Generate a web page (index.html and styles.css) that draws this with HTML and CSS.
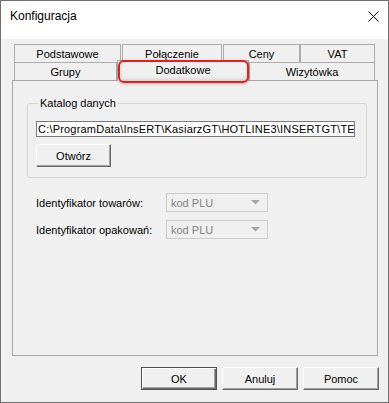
FILE: index.html
```html
<!DOCTYPE html>
<html lang="pl">
<head>
    <meta charset="UTF-8">
    <title>Konfiguracja</title>
    <link rel="stylesheet" href="styles.css">
</head>
<body>
    <div class="window">
        <div class="titlebar">
            <span class="title">Konfiguracja</span>
            <svg class="close" width="11" height="11" viewBox="0 0 11 11">
                <path d="M0.5 0.5 L10.5 10.5 M10.5 0.5 L0.5 10.5" stroke="#000" stroke-width="1" fill="none"/>
            </svg>
        </div>

        <div class="client">
            <div class="tabs">
                <div class="tab-row">
                    <div class="tab t-podstawowe">Podstawowe</div>
                    <div class="tab t-polaczenie">Połączenie</div>
                    <div class="tab t-ceny">Ceny</div>
                    <div class="tab t-vat">VAT</div>
                </div>
                <div class="tab-row">
                    <div class="tab t-grupy">Grupy</div>
                    <div class="tab t-dodatkowe selected">
                        Dodatkowe
                        <span class="highlight"></span>
                    </div>
                    <div class="tab t-wizytowka">Wizytówka</div>
                </div>
            </div>

            <div class="panel">
                <fieldset class="group">
                    <legend>Katalog danych</legend>
                    <div class="textbox">C:\ProgramData\InsERT\KasiarzGT\HOTLINE3\INSERTGT\TEMP</div>
                    <button class="btn btn-open">Otwórz</button>
                </fieldset>

                <div class="field-row first">
                    <span class="label">Identyfikator towarów:</span>
                    <div class="combo">
                        <span>kod PLU</span>
                        <svg width="9" height="5" viewBox="0 0 9 5"><path d="M0 0 H9 L4.5 4.5 Z" fill="#a5a5a5"/></svg>
                    </div>
                </div>
                <div class="field-row">
                    <span class="label">Identyfikator opakowań:</span>
                    <div class="combo">
                        <span>kod PLU</span>
                        <svg width="9" height="5" viewBox="0 0 9 5"><path d="M0 0 H9 L4.5 4.5 Z" fill="#a5a5a5"/></svg>
                    </div>
                </div>
            </div>

            <div class="buttons">
                <button class="btn default">OK</button>
                <button class="btn">Anuluj</button>
                <button class="btn">Pomoc</button>
            </div>
        </div>
    </div>
</body>
</html>
```

FILE: styles.css
```css
body {
    margin: 0;
    font-family: "Liberation Sans", Arial, sans-serif;
    font-size: 11px;
    color: #000;
    background: #ffffff;
}

.window {
    width: 389px;
    height: 403px;
    box-sizing: border-box;
    border: 1px solid #707070;
    background-color: #f0f0f0;
    display: flex;
    flex-direction: column;
}

/* Title bar */
.titlebar {
    height: 38px;
    flex: none;
    background: #fff;
    display: flex;
    justify-content: space-between;
    align-items: flex-start;
    padding: 7px 9px 0 9px;
    box-sizing: border-box;
}
.title {
    font-size: 12px;
    line-height: 16px;
}
.close {
    margin-top: 3px;
}

/* Client area */
.client {
    flex: 1;
    padding: 5px 10px 0 11px;
}

.tabs {
    margin-left: 2px;
}
.tab-row {
    display: flex;
    align-items: flex-start;
}
.tab {
    height: 18px;
    line-height: 18px;
    box-sizing: border-box;
    border: 1px solid #acacac;
    border-bottom: none;
    text-align: center;
    background: #f0f0f0;
    white-space: nowrap;
}
.t-podstawowe { width: 107px; margin-right: 1px; }
.t-polaczenie { width: 100px; margin-right: 1px; }
.t-ceny { width: 77px; }
.t-vat { width: 75px; }
.t-grupy { width: 103px; }
.t-dodatkowe { width: 132px; }
.t-wizytowka { width: 126px; }

.tab.selected {
    position: relative;
    z-index: 1;
    height: 21px;
    margin-top: -2px;
    margin-bottom: -1px;
    line-height: 19px;
}

/* red marker drawn over the selected tab */
.highlight {
    position: absolute;
    left: 0;
    top: -1px;
    width: 131px;
    height: 23px;
    box-sizing: border-box;
    border: 2px solid #ec1c1c;
    border-radius: 6px;
    box-shadow: 0 1px 3px rgba(0, 0, 0, 0.25), inset 0 -2px 3px rgba(0, 0, 0, 0.12);
}

/* Tab page */
.panel {
    width: 366px;
    height: 276px;
    box-sizing: border-box;
    border: 1px solid #a7a7a7;
    padding: 16px 0 0 14px;
}

.group {
    width: 340px;
    box-sizing: border-box;
    margin: 0;
    border: 1px solid #d5d5d5;
    border-radius: 3px;
    padding: 11px 0 10px 8px;
}
.group legend {
    margin-left: 2px;
    padding: 0 2px;
    line-height: 13px;
}

.textbox {
    width: 319px;
    height: 16px;
    box-sizing: border-box;
    border: 1px solid #7a7a7a;
    background: #fff;
    line-height: 14px;
    padding-left: 1px;
    letter-spacing: 0.2px;
    overflow: hidden;
    white-space: nowrap;
}

.btn {
    font-family: "Liberation Sans", Arial, sans-serif;
    font-size: 11px;
    color: #000;
    width: 76px;
    height: 23px;
    padding: 0;
    background: #f0f0f0;
    border: 1px solid;
    border-color: #fff #696969 #696969 #fff;
    box-shadow: inset -1px -1px #a0a0a0;
    border-radius: 0;
}
.btn-open {
    display: block;
    width: 75px;
    margin-top: 7px;
}
.btn.default {
    border: 1px solid #505050;
    box-shadow: inset 1px 1px #fff, inset -1px -1px #696969, inset -2px -2px #a0a0a0;
}

.field-row {
    display: flex;
    align-items: center;
    margin-left: 9px;
    margin-top: 8px;
}
.field-row.first {
    margin-top: 15px;
}
.label {
    width: 130px;
}
.combo {
    width: 102px;
    height: 19px;
    box-sizing: border-box;
    border: 1px solid #cccccc;
    background: #efefef;
    color: #838383;
    display: flex;
    align-items: center;
    justify-content: space-between;
    padding: 0 7px 0 4px;
}

.buttons {
    display: flex;
    justify-content: flex-end;
    gap: 5px;
    margin-top: 11px;
    margin-right: -1px;
}
```
